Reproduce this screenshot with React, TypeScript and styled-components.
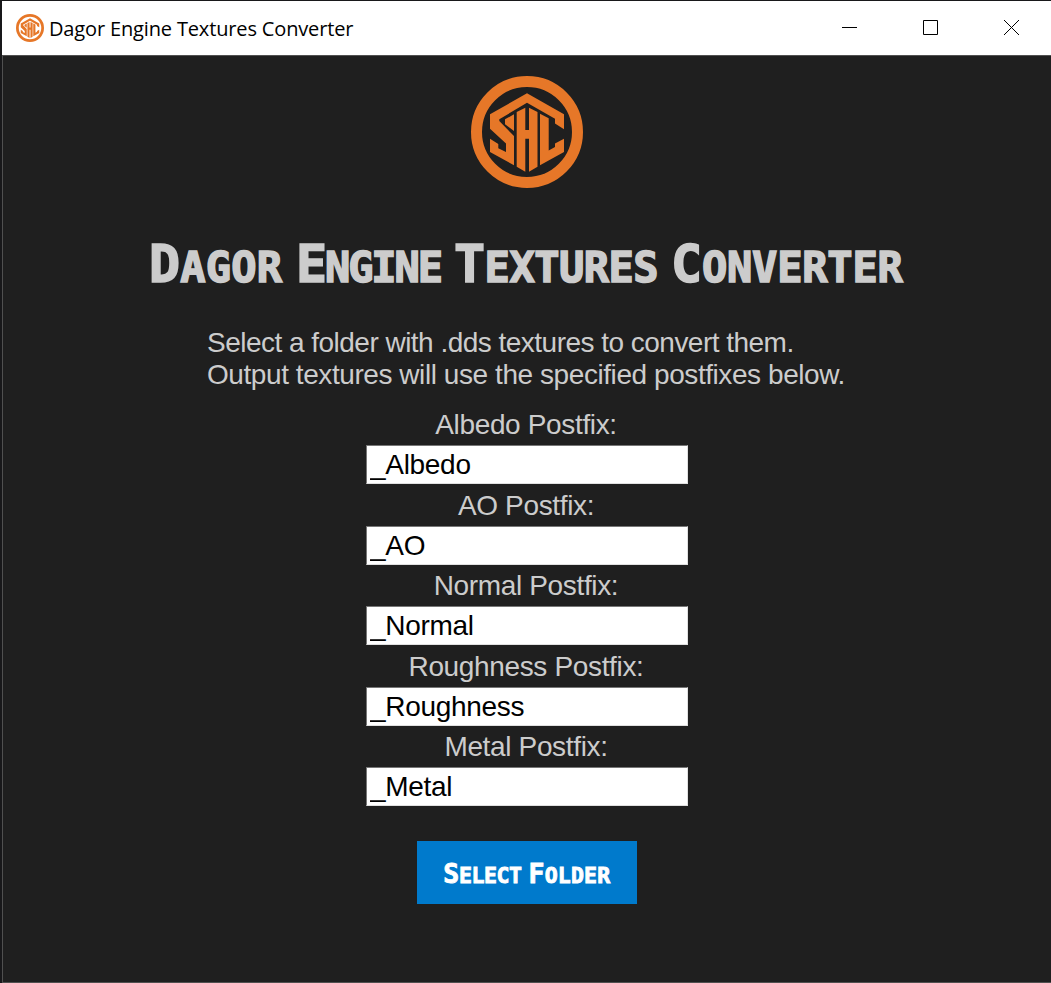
import React, { useState } from "react";
import styled, { createGlobalStyle } from "styled-components";

const GlobalStyle = createGlobalStyle`
  * { box-sizing: border-box; }
  body { margin: 0; background: #1f1f1f; overflow: hidden; }
`;

const Window = styled.main`
  display: flex;
  flex-direction: column;
  width: 1051px;
  height: 983px;
  padding: 1px 0 0 2px;
  background: #18181a;
  font-family: "Liberation Sans", Arial, sans-serif;
`;

const TitleBar = styled.header`
  display: flex;
  align-items: center;
  flex: none;
  height: 54px;
  padding-left: 14px;
  background: #fff;
`;

const WindowTitle = styled.span`
  flex: 1;
  margin-left: 5px;
  padding-top: 2px;
  color: #000;
  font: 20px/28px "Open Sans", "Noto Sans", sans-serif;
  letter-spacing: -0.15px;
`;

const WindowButtons = styled.div`
  display: flex;
  margin-right: -1px;
`;

const WindowButton = styled.button`
  display: grid;
  place-items: center;
  width: 81px;
  height: 54px;
  padding: 0 0 2px;
  border: 0;
  background: transparent;
`;

const Client = styled.section`
  display: flex;
  flex: 1;
  flex-direction: column;
  align-items: center;
  padding: 20px 0 0 0;
  border: solid #505050;
  border-width: 1px 0 1px 1px;
  background: #1f1f1f;
  color: #ccc;
`;

const Heading = styled.h1`
  display: flex;
  gap: 12px;
  width: 756px;
  height: 60px;
  margin: 46px 0 0;
  color: #ccc;
  font: bold 42px/60px "DejaVu Sans Mono", monospace;
  -webkit-text-stroke: 1.6px #ccc;
`;

const Word = styled.span<{ $width: number; $spacing: number }>`
  display: block;
  width: ${(p) => p.$width}px;
  letter-spacing: ${(p) => p.$spacing}px;
  text-transform: uppercase;
  white-space: nowrap;
  &::first-letter { font-size: 1.23em; }
`;

const Intro = styled.p`
  width: 640px;
  margin: 33px 0 0;
  font-size: 28px;
  line-height: 31.5px;
  white-space: nowrap;
`;

const Line = styled.span<{ $spacing: number }>`
  display: block;
  letter-spacing: ${(p) => p.$spacing}px;
`;

const Form = styled.form`
  display: flex;
  flex-direction: column;
  align-items: center;
  margin-top: 17px;
`;

const Field = styled.label`
  display: flex;
  flex-direction: column;
  align-items: center;
  gap: 3px;
  height: 80.6px;
  font-size: 28px;
  line-height: 35px;
  letter-spacing: -0.35px;
`;

const FieldName = styled.span`
  margin-right: 2px;
`;

const Input = styled.input`
  width: 322px;
  height: 39px;
  padding: 1px 2px 0 3px;
  border: 1px solid;
  border-color: #767676 #e0e0e0 #e0e0e0 #767676;
  outline: 0;
  background: #fff;
  color: #000;
  font: 28px "Liberation Sans", Arial, sans-serif;
  letter-spacing: -0.3px;
`;

const SelectButton = styled.button`
  display: flex;
  justify-content: center;
  gap: 6px;
  width: 220px;
  height: 63px;
  margin-top: 31px;
  padding: 1px 0 0;
  border: 0;
  background: #007acc;
  color: #fff;
  font: bold 21.5px/63px "DejaVu Sans Mono", monospace;
  -webkit-text-stroke: 0.9px #fff;
`;

function Logo({ size }: { size: number }) {
  return (
    <svg width={size} height={size} viewBox="0 0 112 112" fill="#e67728">
      <circle cx="56" cy="56" r="50.5" fill="none" stroke="#e67728" strokeWidth="11" />
      <path d="M19 38.3 56 17.3 93 38.3V53.3L84 47.5V42.7L56 26.7 28.3 43.3V45L43 60V89.3L19 76V62.7L27.3 68V72.3L35 76V67.5L19 52.7Z" />
      <path d="M34 43.3 43 38.3V55L34 48.3Z" />
      <path d="M45.7 36 54.3 31.7V54H58V31.7L66.5 36V90.7L58 95.7V62.7H54.3V95.7L45.7 90.7Z" />
      <path d="M69 37.7 77.7 42.3V74.5L84 71V67.5L93 62.7V76L69 89.3Z" />
    </svg>
  );
}

const words = [
  { text: "Dagor", width: 135, spacing: 0.2 },
  { text: "Engine", width: 146, spacing: -2.1 },
  { text: "Textures", width: 205, spacing: -0.5 },
  { text: "Converter", width: 232, spacing: -0.2 },
];

const fields = ["Albedo", "AO", "Normal", "Roughness", "Metal"];

export default function App() {
  const [postfixes, setPostfixes] = useState(fields.map((f) => `_${f}`));
  return (
    <>
      <GlobalStyle />
      <Window>
        <TitleBar>
          <Logo size={28} />
          <WindowTitle>Dagor Engine Textures Converter</WindowTitle>
          <WindowButtons>
            <WindowButton aria-label="Minimize">
              <svg width="15" height="15"><path d="M0 7.5H15" stroke="#000" /></svg>
            </WindowButton>
            <WindowButton aria-label="Maximize">
              <svg width="15" height="15"><path d="M.5.5H14.5V14.5H.5Z" fill="none" stroke="#000" /></svg>
            </WindowButton>
            <WindowButton aria-label="Close">
              <svg width="15" height="15"><path d="M0 0 15 15M15 0 0 15" stroke="#000" /></svg>
            </WindowButton>
          </WindowButtons>
        </TitleBar>
        <Client>
          <Logo size={112} />
          <Heading>
            {words.map((w) => (
              <Word key={w.text} $width={w.width} $spacing={w.spacing}>{w.text}</Word>
            ))}
          </Heading>
          <Intro>
            <Line $spacing={-0.52}>Select a folder with .dds textures to convert them.</Line>
            <Line $spacing={-0.43}>Output textures will use the specified postfixes below.</Line>
          </Intro>
          <Form onSubmit={(e) => e.preventDefault()}>
            {fields.map((name, i) => (
              <Field key={name}>
                <FieldName>{name} Postfix:</FieldName>
                <Input
                  value={postfixes[i]}
                  onChange={(e) => setPostfixes(postfixes.map((p, j) => (j === i ? e.target.value : p)))}
                />
              </Field>
            ))}
          </Form>
          <SelectButton type="button">
            <Word $width={79} $spacing={-0.4}>Select</Word>
            <Word $width={83} $spacing={0.2}>Folder</Word>
          </SelectButton>
        </Client>
      </Window>
    </>
  );
}
